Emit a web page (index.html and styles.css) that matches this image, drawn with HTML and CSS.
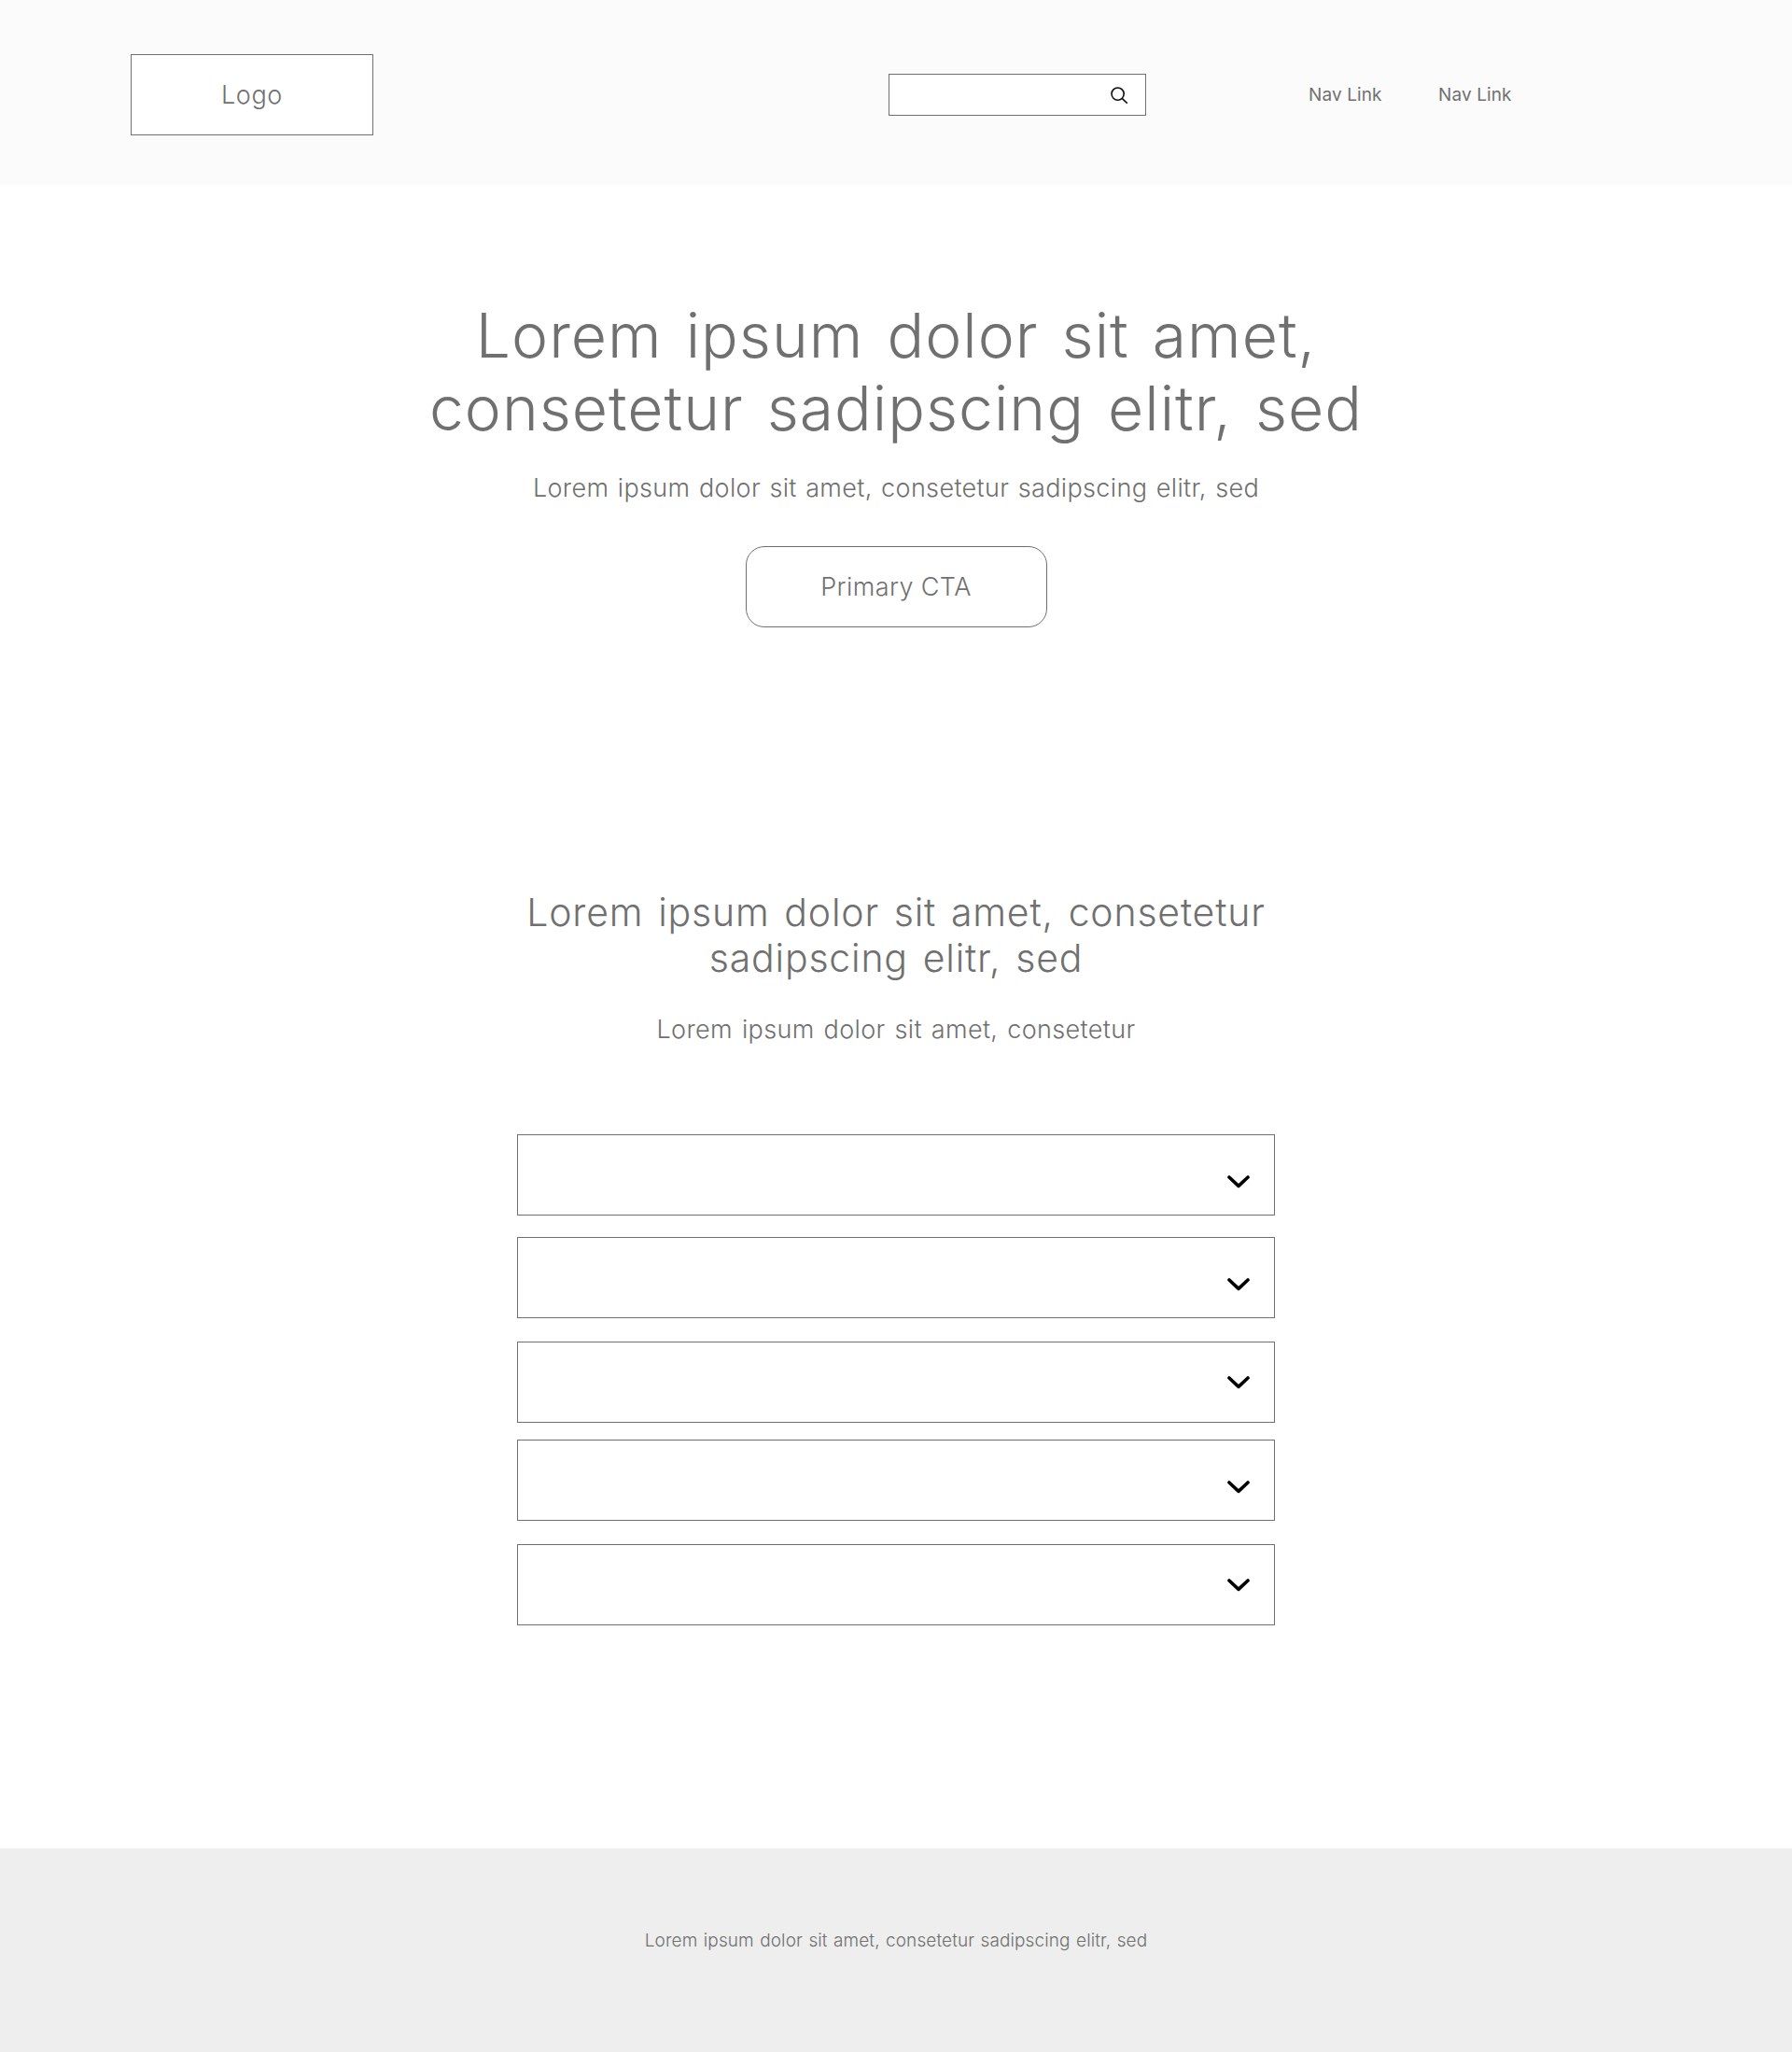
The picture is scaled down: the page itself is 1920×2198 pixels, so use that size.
FILE: index.html
```html
<!DOCTYPE html>
<html lang="en">
<head>
<meta charset="utf-8">
<title>Wireframe</title>
<link rel="stylesheet" href="styles.css">
</head>
<body>
<header class="site-header">
  <div class="logo">Logo</div>
  <div class="search">
    <svg class="search-icon" viewBox="0 0 18 18" width="18" height="18" fill="none" stroke="#111" stroke-width="1.6"><circle cx="7.6" cy="7.6" r="6.6"/><path d="M12.4 12.6 L17.6 17.4" stroke-linecap="round"/></svg>
  </div>
  <nav class="nav">
    <a class="nav-link">Nav Link</a>
    <a class="nav-link">Nav Link</a>
  </nav>
</header>
<main>
  <section class="hero">
    <h1 class="hero-title">Lorem ipsum dolor sit amet,<br>consetetur sadipscing elitr, sed</h1>
    <p class="hero-sub">Lorem ipsum dolor sit amet, consetetur sadipscing elitr, sed</p>
    <a class="cta">Primary CTA</a>
  </section>
  <section class="faq">
    <h2 class="faq-title">Lorem ipsum dolor sit amet, consetetur<br>sadipscing elitr, sed</h2>
    <p class="faq-sub">Lorem ipsum dolor sit amet, consetetur</p>
    <div class="accordion">
      <div class="acc-item"><svg class="chev" viewBox="0 0 24 14" width="24" height="14" fill="none" stroke="#000" stroke-width="3.6" stroke-linecap="round" stroke-linejoin="round"><path d="M2 2 L12 11.4 L22 2"/></svg></div>
      <div class="acc-item gap-a"><svg class="chev" viewBox="0 0 24 14" width="24" height="14" fill="none" stroke="#000" stroke-width="3.6" stroke-linecap="round" stroke-linejoin="round"><path d="M2 2 L12 11.4 L22 2"/></svg></div>
      <div class="acc-item gap-b"><svg class="chev chev-mid" viewBox="0 0 24 14" width="24" height="14" fill="none" stroke="#000" stroke-width="3.6" stroke-linecap="round" stroke-linejoin="round"><path d="M2 2 L12 11.4 L22 2"/></svg></div>
      <div class="acc-item gap-c"><svg class="chev" viewBox="0 0 24 14" width="24" height="14" fill="none" stroke="#000" stroke-width="3.6" stroke-linecap="round" stroke-linejoin="round"><path d="M2 2 L12 11.4 L22 2"/></svg></div>
      <div class="acc-item gap-b"><svg class="chev chev-mid" viewBox="0 0 24 14" width="24" height="14" fill="none" stroke="#000" stroke-width="3.6" stroke-linecap="round" stroke-linejoin="round"><path d="M2 2 L12 11.4 L22 2"/></svg></div>
    </div>
  </section>
</main>
<footer class="site-footer">
  <p class="footer-text">Lorem ipsum dolor sit amet, consetetur sadipscing elitr, sed</p>
</footer>
</body>
</html>
```

FILE: styles.css
```css
* { box-sizing: border-box; }
html, body { margin: 0; padding: 0; }
body {
  background: #fff;
  color: #707070;
  font-family: "Inter", "Liberation Sans", sans-serif;
  font-weight: 300;
}
.site-header {
  height: 198px;
  background: #fbfbfb;
  padding: 58px 0 0 140px;
  display: flex;
  align-items: flex-start;
}
.logo {
  width: 260px;
  height: 87px;
  background: #fff;
  border: 1px solid #707070;
  display: flex;
  align-items: center;
  justify-content: center;
  font-size: 27px;
  letter-spacing: 0.6px;
}
.search {
  width: 276px;
  height: 45px;
  margin: 21px 0 0 552px;
  background: #fff;
  border: 1px solid #707070;
  display: flex;
  align-items: center;
  justify-content: flex-end;
  padding-right: 19px;
}
.search-icon { display: block; }
.nav {
  display: flex;
  gap: 60px;
  margin: 21px 0 0 174px;
  height: 45px;
  align-items: center;
}
.nav-link {
  font-size: 19px;
  font-weight: 400;
  width: 79px;
  letter-spacing: 0.1px;
  white-space: nowrap;
}
.hero { padding-top: 122px; text-align: center; }
.hero-title {
  margin: 0;
  font-size: 66px;
  line-height: 78px;
  font-weight: 300;
  letter-spacing: 1px;
  word-spacing: 5.5px;
  white-space: nowrap;
}
.hero-sub {
  margin: 30px 0 0;
  font-size: 27px;
  line-height: 34px;
  letter-spacing: 0.35px;
  word-spacing: 1.5px;
  white-space: nowrap;
}
.cta {
  display: flex;
  align-items: center;
  justify-content: center;
  width: 323px;
  height: 87px;
  margin: 45px auto 0;
  border: 1px solid #707070;
  border-radius: 20px;
  font-size: 27px;
  letter-spacing: 0.4px;
}
.faq { padding-top: 281px; text-align: center; }
.faq-title {
  margin: 0;
  font-size: 41px;
  line-height: 49px;
  font-weight: 300;
  letter-spacing: 0.8px;
  word-spacing: 3.5px;
  white-space: nowrap;
}
.faq-sub {
  margin: 35px 0 0;
  font-size: 27px;
  line-height: 34px;
  letter-spacing: 0.35px;
  word-spacing: 2px;
}
.accordion {
  width: 812px;
  margin: 95px 0 0 554px;
}
.acc-item {
  height: 87px;
  border: 1px solid #707070;
  position: relative;
}
.gap-a { margin-top: 23px; }
.gap-b { margin-top: 25px; }
.gap-c { margin-top: 18px; }
.chev {
  position: absolute;
  right: 26px;
  top: 43px;
}
.chev-mid { top: 36px; }
.site-footer {
  margin-top: 239px;
  height: 218px;
  background: #eee;
  padding-top: 87px;
  text-align: center;
}
.footer-text {
  margin: 0;
  font-size: 19px;
  line-height: 24px;
  letter-spacing: 0.1px;
  word-spacing: 1px;
}
```
